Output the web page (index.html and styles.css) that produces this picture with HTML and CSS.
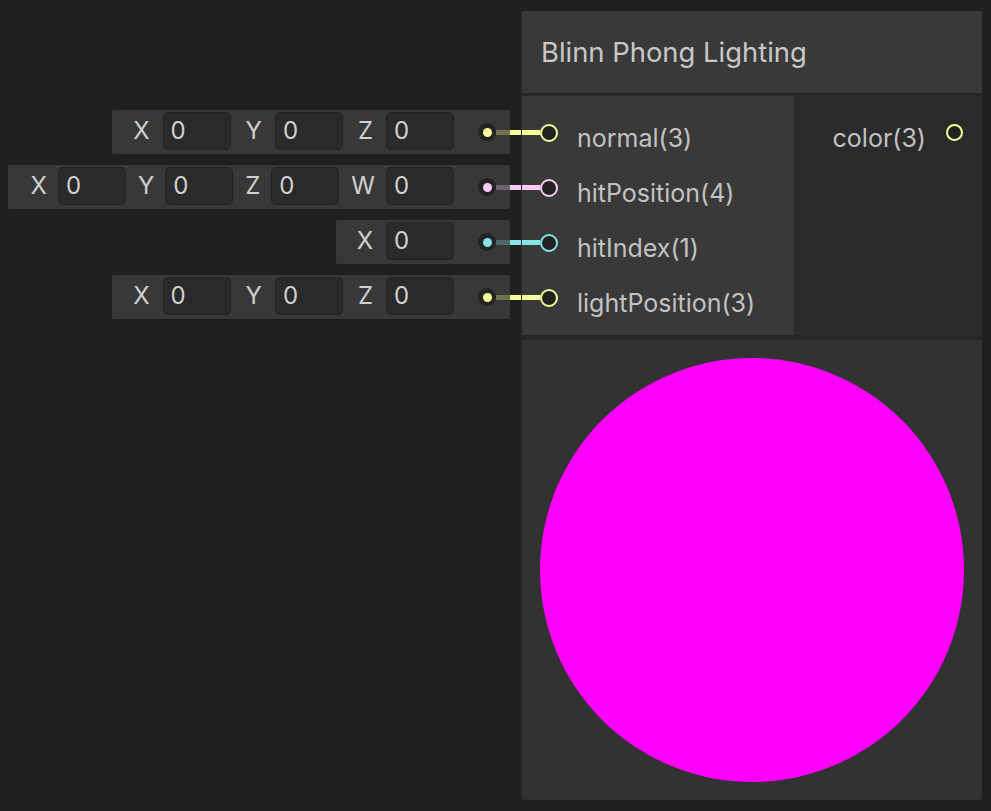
FILE: index.html
```html
<!DOCTYPE html>
<html>
<head>
<meta charset="utf-8">
<link rel="stylesheet" href="styles.css">
</head>
<body>
<div class="canvas">
  <div class="left">
    <div class="erow">
      <div class="editor v3">
        <span class="lbl">X</span><span class="field">0</span>
        <span class="lbl">Y</span><span class="field">0</span>
        <span class="lbl">Z</span><span class="field">0</span>
        <span class="dot"><i></i></span><span class="dim"></span>
      </div>
      <span class="wire"></span>
    </div>
    <div class="erow c-pink">
      <div class="editor v4">
        <span class="lbl">X</span><span class="field">0</span>
        <span class="lbl">Y</span><span class="field">0</span>
        <span class="lbl">Z</span><span class="field">0</span>
        <span class="lbl">W</span><span class="field">0</span>
        <span class="dot"><i></i></span><span class="dim"></span>
      </div>
      <span class="wire"></span>
    </div>
    <div class="erow c-cyan">
      <div class="editor v1">
        <span class="lbl">X</span><span class="field">0</span>
        <span class="dot"><i></i></span><span class="dim"></span>
      </div>
      <span class="wire"></span>
    </div>
    <div class="erow">
      <div class="editor v3">
        <span class="lbl">X</span><span class="field">0</span>
        <span class="lbl">Y</span><span class="field">0</span>
        <span class="lbl">Z</span><span class="field">0</span>
        <span class="dot"><i></i></span><span class="dim"></span>
      </div>
      <span class="wire"></span>
    </div>
  </div>

  <div class="node">
    <div class="header">Blinn Phong Lighting</div>
    <div class="sep"></div>
    <div class="ports">
      <div class="inputs">
        <div class="port"><span class="wire w2"></span><span class="ring"></span><span class="pname">normal(3)</span></div>
        <div class="port c-pink"><span class="wire w2"></span><span class="ring"></span><span class="pname">hitPosition(4)</span></div>
        <div class="port c-cyan"><span class="wire w2"></span><span class="ring"></span><span class="pname">hitIndex(1)</span></div>
        <div class="port"><span class="wire w2"></span><span class="ring"></span><span class="pname">lightPosition(3)</span></div>
      </div>
      <div class="divider"></div>
      <div class="outputs">
        <div class="port out"><span class="pname">color(3)</span><span class="ring"></span></div>
      </div>
    </div>
    <div class="sep2"></div>
    <div class="preview"><div class="ball"></div></div>
  </div>
</div>
</body>
</html>
```

FILE: styles.css
```css
* { box-sizing: border-box; }
html, body { margin: 0; padding: 0; }
body {
  background: #202020;
  width: 991px;
  height: 811px;
  overflow: hidden;
  font-family: Inter, "Noto Sans", sans-serif;
  color: #c4c4c4;
}
.canvas {
  display: flex;
  padding-top: 11px;
}
.left {
  width: 521px;
  flex: none;
  padding-top: 99px;
  display: flex;
  flex-direction: column;
  align-items: flex-end;
  gap: 11px;
}
.erow {
  --c: #f6ff9a;
  --d: #6f7152;
  display: flex;
  align-items: center;
  height: 44px;
}
.erow.c-pink, .port.c-pink { --c: #fbcbf4; --d: #6f6170; }
.erow.c-cyan, .port.c-cyan { --c: #84e4e7; --d: #4d6667; }
.editor {
  height: 44px;
  background: #383838;
  border-radius: 2px;
  display: flex;
  align-items: center;
  padding: 0 0 3px 6px;
  font-size: 24px;
}
.lbl {
  margin: 0 13px 0 15px;
  color: #cfcfcf;
  line-height: 1;
}
.v4 .lbl { margin: 0 11px 0 12px; }
.v4 .lbl:first-child { margin-left: 17px; }
.field {
  width: 68px;
  height: 38px;
  background: #2a2a2a;
  border: 1px solid #222222;
  border-radius: 5px;
  padding-left: 7px;
  display: flex;
  align-items: center;
  color: #d0d0d0;
}
.dot {
  width: 18px;
  height: 18px;
  border-radius: 50%;
  background: #232323;
  margin-left: 24px;
  display: flex;
  align-items: center;
  justify-content: center;
  margin-top: 3px;
}
.dot i {
  width: 9px;
  height: 9px;
  border-radius: 50%;
  background: var(--c);
}
.dim {
  width: 14px;
  height: 5px;
  background: var(--d);
  margin-top: 3px;
}
.wire {
  width: 11px;
  height: 5px;
  background: var(--c);
}
.node {
  width: 461px;
  flex: none;
  display: flex;
  flex-direction: column;
  border-left: 1px solid #2a2a2a;
}
.header {
  height: 82px;
  background: #393939;
  display: flex;
  align-items: center;
  padding-left: 19px;
  font-size: 27.4px;
  color: #c8c8c8;
}
.sep { height: 3px; background: #252525; }
.ports {
  height: 239px;
  display: flex;
}
.inputs {
  width: 272px;
  background: #393939;
  padding-top: 9px;
}
.divider { width: 1px; background: #262626; }
.outputs {
  flex: 1;
  background: #2b2b2b;
  padding-top: 9px;
}
.port {
  --c: #f6ff9a;
  height: 55px;
  display: flex;
  align-items: center;
  font-size: 25px;
}
.w2 { width: 18px; }
.ring {
  width: 18px;
  height: 18px;
  border-radius: 50%;
  border: 2px solid var(--c);
  background: #222222;
  flex: none;
}
.pname {
  margin-left: 19px;
  color: #c2c2c2;
  padding-top: 11px;
}
.port.out {
  justify-content: flex-end;
  padding-right: 19px;
}
.port.out .ring { width: 17px; height: 17px; }
.port.out .pname { margin-left: 0; margin-right: 20px; }
.sep2 { height: 5px; background: #262626; }
.preview {
  height: 460px;
  background: #323232;
  display: flex;
  align-items: center;
  justify-content: center;
  border-radius: 0 0 4px 4px;
}
.ball {
  width: 424px;
  height: 424px;
  border-radius: 50%;
  background: #ff00ff;
}
```
